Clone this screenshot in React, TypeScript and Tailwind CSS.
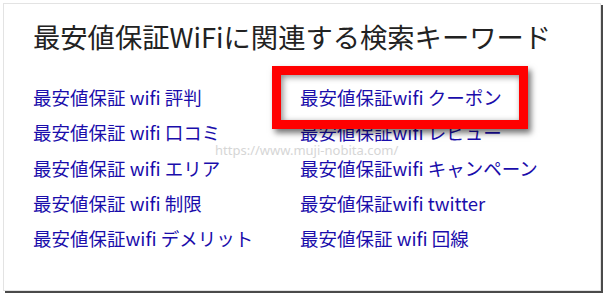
import React from 'react';

const left = [
  '最安値保証 wifi 評判',
  '最安値保証 wifi 口コミ',
  '最安値保証 wifi エリア',
  '最安値保証 wifi 制限',
  '最安値保証wifi デメリット',
];

const right = [
  '最安値保証wifi クーポン',
  '最安値保証wifi レビュー',
  '最安値保証wifi キャンペーン',
  '最安値保証wifi twitter',
  '最安値保証 wifi 回線',
];

const App: React.FC = () => {
  return (
    <div className="w-[606px] h-[296px] bg-white p-[3px] font-['Noto_Sans_CJK_JP',sans-serif]">
      <div className="relative w-[598px] h-[288px] border border-[#e3e3e3] shadow-[2px_2px_0_#4a4a4a] bg-white pl-[29px] pt-[14px]">
        <h2 className="text-[27.3px] leading-[36px] text-[#222]">
          最安値保証WiFiに関連する検索キーワード
        </h2>

        <div className="mt-[26px] grid grid-cols-[267px_1fr]">
          <div className="flex flex-col">
            {left.map((k) => (
              <a key={k} className="text-[#1a0dab] text-[18.5px] leading-[35.25px] h-[35.25px]">{k}</a>
            ))}
          </div>
          <div className="flex flex-col">
            {right.map((k) => (
              <a key={k} className="text-[#1a0dab] text-[18.5px] leading-[35.25px] h-[35.25px]">{k}</a>
            ))}
          </div>
        </div>

        {/* watermark */}
        <div className="absolute left-[211px] top-[137px] text-[13px] text-[#d6d6d6] font-['Noto_Sans',sans-serif]">
          https://www.muji-nobita.com/
        </div>

        {/* highlight box */}
        <div className="absolute left-[268px] top-[62px] w-[256px] h-[63px] border-[9px] border-[#ff0000] shadow-[3px_4px_6px_rgba(0,0,0,0.55),inset_2px_2px_6px_rgba(0,0,0,0.45)]" />
      </div>
    </div>
  );
};

export default App;
